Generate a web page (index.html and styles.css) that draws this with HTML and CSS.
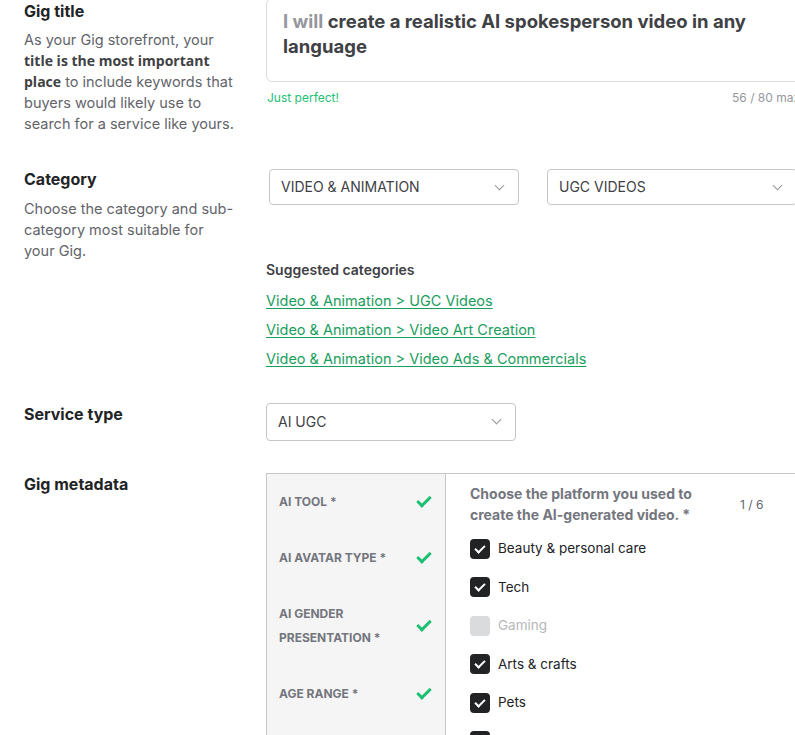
FILE: index.html
```html
<!DOCTYPE html>
<html lang="en">
	<head>
		<meta charset="UTF-8" />
		<title>Gig overview</title>
		<link rel="stylesheet" href="styles.css">
	</head>
	<body>
		<div class="form">
			<!-- Gig title -->
			<div class="row row-title">
				<div class="label">
					<h3>Gig title</h3>
					<p>As your Gig storefront, your <b>title is the most important place</b> to include keywords that buyers would likely use to search for a service like yours.</p>
				</div>
				<div class="field">
					<div class="title-box"><div class="title-text"><span class="prefix">I will</span> create a realistic AI spokesperson video in any language</div></div>
					<div class="title-meta">
						<span class="ok">Just perfect!</span>
						<span class="count">56 / 80 max</span>
					</div>
				</div>
			</div>

			<!-- Category -->
			<div class="row row-category">
				<div class="label">
					<h3>Category</h3>
					<p>Choose the category and sub-category most suitable for your Gig.</p>
				</div>
				<div class="field">
					<div class="selects">
						<div class="select">VIDEO &amp; ANIMATION<span class="chev"></span></div>
						<div class="select">UGC VIDEOS<span class="chev"></span></div>
					</div>
					<div class="suggested">
						<h4>Suggested categories</h4>
						<a href="#">Video &amp; Animation &gt; UGC Videos</a>
						<a href="#">Video &amp; Animation &gt; Video Art Creation</a>
						<a href="#">Video &amp; Animation &gt; Video Ads &amp; Commercials</a>
					</div>
				</div>
			</div>

			<!-- Service type -->
			<div class="row row-service">
				<div class="label">
					<h3>Service type</h3>
				</div>
				<div class="field">
					<div class="select select-service">AI UGC<span class="chev"></span></div>
				</div>
			</div>

			<!-- Gig metadata -->
			<div class="row row-meta">
				<div class="label">
					<h3>Gig metadata</h3>
				</div>
				<div class="field">
					<div class="meta">
						<ul class="meta-tabs">
							<li><span>AI TOOL *</span><i class="tick"></i></li>
							<li><span>AI AVATAR TYPE *</span><i class="tick"></i></li>
							<li><span>AI GENDER PRESENTATION *</span><i class="tick"></i></li>
							<li><span>AGE RANGE *</span><i class="tick"></i></li>
						</ul>
						<div class="meta-body">
							<div class="meta-head">
								<p>Choose the platform you used to create the AI-generated video. *</p>
								<span class="meta-count">1 / 6</span>
							</div>
							<ul class="checks">
								<li><i class="box on"></i>Beauty &amp; personal care</li>
								<li><i class="box on"></i>Tech</li>
								<li class="disabled"><i class="box"></i>Gaming</li>
								<li><i class="box on"></i>Arts &amp; crafts</li>
								<li><i class="box on"></i>Pets</li>
								<li><i class="box on"></i>Food &amp; cooking</li>
							</ul>
						</div>
					</div>
				</div>
			</div>
		</div>
	</body>
</html>
```

FILE: styles.css
```css
html {
	overflow: hidden;
}
body {
	margin: 0;
	background: #fff;
	font-family: Inter, "Open Sans", sans-serif;
	color: #404145;
}
.form {
	width: 940px;
	margin-top: -2px;
	padding-left: 24px;
}
.row {
	display: flex;
}
.label {
	width: 242px;
	flex: none;
}
.label h3 {
	margin: 0;
	font-size: 16px;
	font-weight: 700;
	color: #222325;
	line-height: 24px;
}
.label p {
	margin: 6px 30px 0 0;
	font-size: 14.5px;
	line-height: 21px;
	color: #62646a;
}
.label p b {
	font-family: "Open Sans", Inter, sans-serif;
	font-size: 14px;
	color: #404145;
}
.field {
	flex: 1;
}

/* title */
.row-title .label h3 {
	margin-top: 1px;
}
.title-box {
	border: 1px solid #dadbdd;
	border-radius: 6px;
	height: 58px;
	padding: 10px 16px 14px;
	font-size: 18.5px;
	font-weight: 700;
	line-height: 25px;
	color: #404145;
}
.title-text {
	width: 490px;
}
.title-box .prefix {
	color: #95979d;
}
.title-meta {
	display: flex;
	justify-content: space-between;
	width: 534px;
	margin-top: 7px;
	font-size: 12px;
	line-height: 18px;
}
.ok {
	color: #1dbf73;
	padding-left: 1px;
}
.count {
	color: #95979d;
}

/* category */
.row-category {
	margin-top: 39px;
}
.row-category .label h3 {
	margin-top: -6px;
}
.row-category .label p {
	margin-top: 7px;
}
.selects {
	display: flex;
	gap: 28px;
	padding-left: 3px;
	margin-top: -4px;
}
.select {
	position: relative;
	width: 250px;
	height: 36px;
	box-sizing: border-box;
	border: 1px solid #c5c6c9;
	border-radius: 4px;
	padding: 0 11px;
	font-size: 14px;
	line-height: 34px;
	color: #404145;
}
.chev {
	position: absolute;
	right: 15px;
	top: 12px;
	width: 6px;
	height: 6px;
	border-right: 1px solid #95979d;
	border-bottom: 1px solid #95979d;
	transform: rotate(45deg);
}
.suggested {
	margin-top: 53px;
}
.suggested h4 {
	margin: 0 0 4px;
	font-size: 14px;
	font-weight: 600;
	line-height: 24px;
	color: #404145;
}
.suggested a {
	display: block;
	font-size: 14.5px;
	line-height: 29px;
	color: #1a9e5c;
	text-decoration: underline;
	text-underline-offset: 2px;
}

/* service type */
.row-service {
	margin-top: 30px;
}
.row-service .label h3 {
	margin-top: -1px;
}
.select-service {
	width: 250px;
	height: 38px;
	line-height: 36px;
}

/* metadata */
.row-meta {
	margin-top: 32px;
}
.row-meta .label h3 {
	margin-top: -1px;
}
.meta {
	display: flex;
	border: 1px solid #c5c6c9;
	height: 400px;
}
.meta-tabs {
	list-style: none;
	margin: 0;
	padding: 16px 12px 0;
	width: 154px;
	background: #f5f5f5;
	border-right: 1px solid #c5c6c9;
}
.meta-tabs li {
	display: flex;
	align-items: center;
	justify-content: space-between;
	margin-bottom: 32px;
	font-size: 12px;
	font-weight: 700;
	line-height: 24px;
	color: #74767e;
}
.meta-tabs li span {
	max-width: 120px;
}
.tick {
	width: 5px;
	height: 11px;
	border-right: 3px solid #1dbf73;
	border-bottom: 3px solid #1dbf73;
	transform: rotate(45deg);
	margin: 0 5px 4px 0;
}
.meta-body {
	flex: 1;
	padding: 9px 24px;
}
.meta-head {
	display: flex;
	align-items: center;
	gap: 42px;
}
.meta-head p {
	margin: 0;
	width: 228px;
	font-size: 14px;
	font-weight: 700;
	line-height: 21px;
	color: #74767e;
}
.meta-count {
	font-size: 12px;
	color: #62646a;
}
.checks {
	list-style: none;
	margin: 4px 0 0;
	padding: 0;
}
.checks li {
	display: flex;
	align-items: center;
	gap: 8px;
	height: 38.5px;
	font-size: 13.5px;
	color: #222325;
}
.box {
	width: 20px;
	height: 20px;
	border-radius: 4px;
	background: #dadbdd;
	position: relative;
	margin-top: 1px;
}
.box.on {
	background: #222325;
}
.box.on::after {
	content: "";
	position: absolute;
	left: 7px;
	top: 4px;
	width: 4px;
	height: 8px;
	border-right: 2px solid #fff;
	border-bottom: 2px solid #fff;
	transform: rotate(45deg);
}
.checks li.disabled {
	color: #b5b6ba;
}
```
